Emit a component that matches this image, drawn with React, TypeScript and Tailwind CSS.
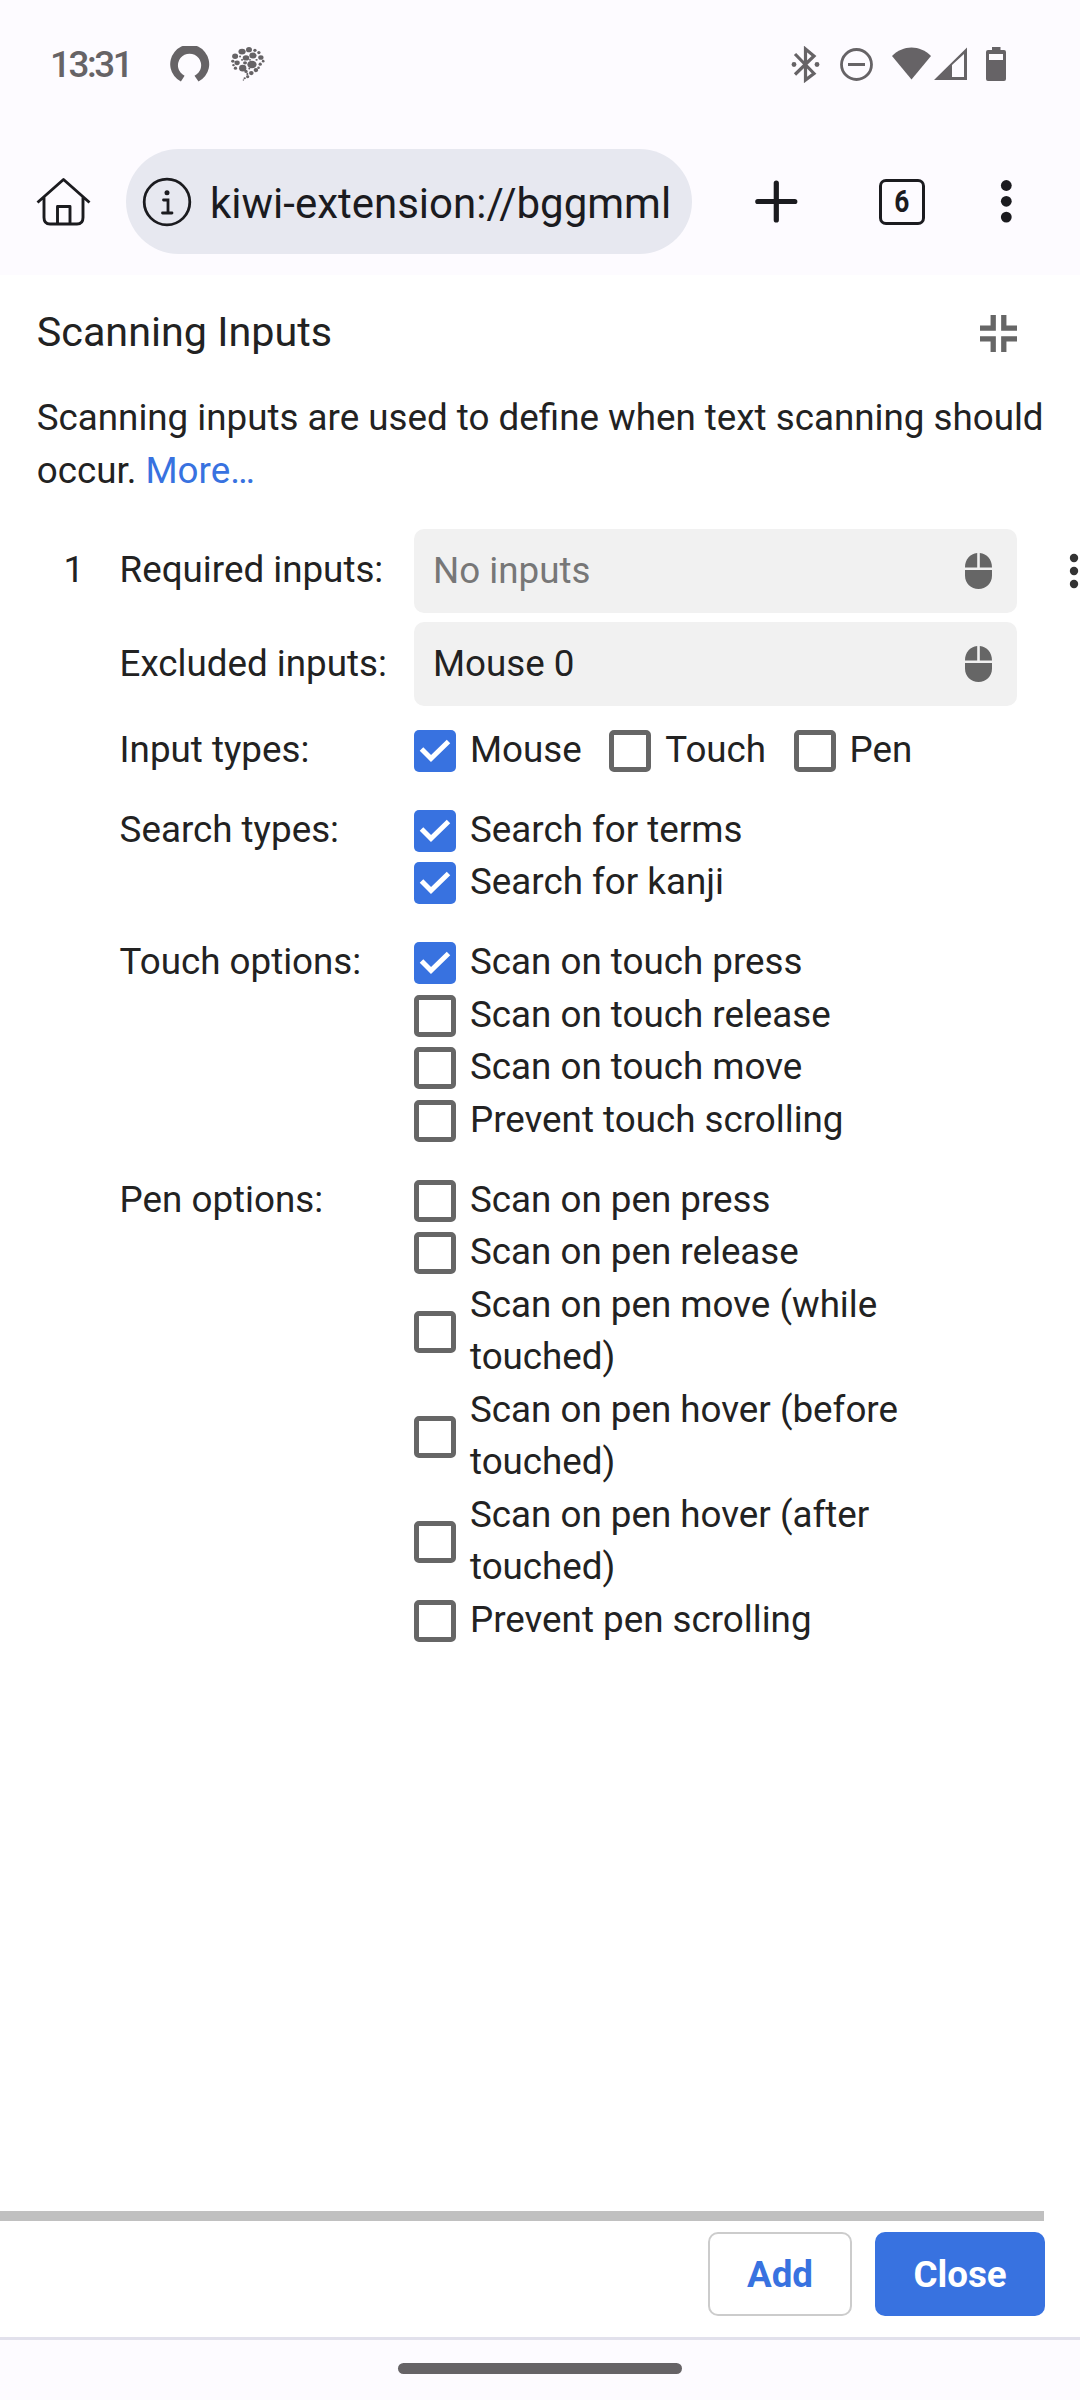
import React from "react";

type Option = { label: string; checked?: boolean };

const searchTypes: Option[] = [
  { label: "Search for terms", checked: true },
  { label: "Search for kanji", checked: true },
];

const touchOptions: Option[] = [
  { label: "Scan on touch press", checked: true },
  { label: "Scan on touch release" },
  { label: "Scan on touch move" },
  { label: "Prevent touch scrolling" },
];

const penOptions: Option[] = [
  { label: "Scan on pen press" },
  { label: "Scan on pen release" },
  { label: "Scan on pen move (while touched)" },
  { label: "Scan on pen hover (before touched)" },
  { label: "Scan on pen hover (after touched)" },
  { label: "Prevent pen scrolling" },
];

// Notification dots: cx, cy, rx, ry
const dots: number[][] = [
  [33, 20, 11, 9], [54, 14, 9, 8], [72, 16, 5, 5], [84, 23, 5, 5], [12, 34, 9, 8],
  [45, 39, 10, 8], [66, 32, 11, 9], [90, 38, 8, 7], [27, 35, 3, 3], [5, 49, 5, 4.5],
  [18, 54, 8, 7], [42, 54, 6, 5], [33, 45, 3.5, 3], [63, 59, 14, 11.5], [57, 45, 3, 3],
  [77, 45, 3.5, 3], [88, 58, 5, 5], [97, 49, 4, 4], [35, 70, 11, 10], [13, 70, 5, 5],
  [7, 61, 4, 3.5], [75, 76, 7, 6.5], [45, 80, 5, 5], [55, 71, 3, 3], [61, 85, 7, 6.5],
  [83, 69, 4, 4], [50, 96, 5, 4.5], [41, 101, 3.5, 3], [37, 106, 2, 2], [49, 88, 3, 4],
];

function Checkbox({ checked }: { checked?: boolean }) {
  return checked ? (
    <span className="mt-[1.6px] flex size-[42px] shrink-0 rounded-[5px] bg-[#3872e0]">
      <svg viewBox="0 0 42 42" className="size-[42px]">
        <path d="M7.5 19 17 28.5 34.5 11.5" fill="none" stroke="#fff" strokeWidth="5" />
      </svg>
    </span>
  ) : (
    <span className="mt-[1.6px] size-[42px] shrink-0 rounded-[5px] border-[5px] border-[#666]" />
  );
}

function Check({ option }: { option: Option }) {
  return (
    <label className="flex items-center gap-[14px]">
      <Checkbox checked={option.checked} />
      <span>{option.label}</span>
    </label>
  );
}

function Row({ label, children }: { label: string; children: React.ReactNode }) {
  return (
    <div className="flex">
      <div className="w-[294.4px] shrink-0">{label}</div>
      <div className="w-[510px]">{children}</div>
    </div>
  );
}

function MouseIcon() {
  return (
    <svg viewBox="0 0 27 36" className="h-9 w-[27px]" fill="#666">
      <path d="M0 14.5C0 6.500 5 .6 12.200 0V14.500ZM14.800 0C22 .6 27 6.500 27 14.500H14.800ZM0 17H27V22.500C27 30.500 21 36 13.500 36S0 30.500 0 22.500Z" />
    </svg>
  );
}

function InputRow({ label, value, muted }: { label: string; value: string; muted?: boolean }) {
  return (
    <div className="flex h-[84px] items-center">
      <div className={muted ? "w-[294.4px] shrink-0 pb-[2px]" : "w-[294.4px] shrink-0"}>{label}</div>
      <div className="flex h-[84px] w-[603px] items-center justify-between rounded-[10px] bg-[#f1f1f1] pr-[25px] pl-[19px]">
        <span className={muted ? "text-[#777]" : ""}>{value}</span>
        <MouseIcon />
      </div>
    </div>
  );
}

function StatusBar() {
  return (
    <header className="flex h-[128px] items-center pl-[50px] text-[#666366]">
      <div className="w-[120px] pt-[2px] text-[36.75px] font-medium tracking-[-2.4px]">13:31</div>
      <svg viewBox="0 0 40 36" className="h-9 w-10">
        <path d="M10.900 35.600A19.500 19.500 0 1 1 28.500 35.600L24.500 29.800A11.600 11.600 0 1 0 14.600 29.800Z" fill="#666366" />
      </svg>
      <svg viewBox="0 6 102 103" className="ml-[21px] h-[34px] w-[34px]" fill="#666366">
        {dots.map(([cx, cy, rx, ry], i) => (
          <ellipse key={i} cx={cx} cy={cy} rx={rx} ry={ry} />
        ))}
      </svg>
      <svg viewBox="790 46 218 37" className="ml-[525px] h-[37px] w-[218px]" fill="#666366">
        <path d="M795 54 814 73.500 805.500 80V49L814 56 795 74.500" fill="none" stroke="#666366" strokeWidth="3.200" />
        <circle cx="794" cy="64.500" r="2.400" />
        <circle cx="817" cy="64.500" r="2.400" />
        <circle cx="856.500" cy="64.500" r="15" fill="none" stroke="#666366" strokeWidth="2.800" />
        <path d="M848 63H865V66H848Z" />
        <path d="M892 56C903 44.500 920 44.500 931 56L911.500 79.500Z" />
        <path fillRule="evenodd" d="M934 80 967 47.500V80ZM952 65V77H964V54Z" />
        <path fillRule="evenodd" d="M992 47H1000.500V50H1004Q1006 50 1006 52V79Q1006 81 1004 81H988Q986 81 986 79V52Q986 50 988 50H992ZM989 54V60H1003V54Z" />
      </svg>
    </header>
  );
}

function Toolbar() {
  return (
    <nav className="flex h-[147px] items-center pl-9 text-[#1b1b1f]">
      <svg viewBox="36 176.500 56 50" className="h-[50px] w-14" fill="none" stroke="#1b1b1f" strokeWidth="2.900">
        <path d="M37.500 202 63.500 179 89.500 202M44 197V217Q44 223.500 50 223.500H77Q83 223.500 83 217V197M57.500 223V206H70V223" strokeLinejoin="round" />
      </svg>
      <div className="ml-[34px] flex h-[105px] w-[566px] items-center overflow-hidden rounded-full bg-[#e7e8f0] pl-4">
        <svg viewBox="0 0 50 50" className="size-[50px] shrink-0" fill="none" stroke="#1b1b1f" strokeWidth="2.800" strokeLinecap="round">
          <circle cx="25" cy="25" r="22.800" />
          <path d="M21.500 23H26V36M20.500 36H30" />
          <circle cx="25" cy="15.800" r="2.500" fill="#1b1b1f" stroke="none" />
        </svg>
        <span className="ml-[18px] pt-[5px] text-[42px] leading-none whitespace-nowrap">kiwi-extension://bggmml</span>
      </div>
      <svg viewBox="0 0 44 44" className="ml-[62px] size-11" stroke="#1b1b1f" strokeWidth="5.200" strokeLinecap="round">
        <path d="M22.300 3V40M3.800 21.500H40.800" />
      </svg>
      <div className="ml-[81px] flex size-[46px] items-center justify-center rounded-[7px] border-[3px] border-[#1b1b1f] text-[31px] leading-none font-bold">
        <span className="scale-x-[.85]">6</span>
      </div>
      <svg viewBox="0 0 12 44" className="ml-[75px] h-11 w-3" fill="#1b1b1f">
        <circle cx="6.300" cy="5.500" r="5.400" />
        <circle cx="6.300" cy="21.300" r="5.400" />
        <circle cx="6.300" cy="37.100" r="5.400" />
      </svg>
    </nav>
  );
}

export default function App() {
  return (
    <div className="flex h-[2400px] w-[1080px] flex-col overflow-hidden bg-[#fdfbff] font-['Roboto',sans-serif]">
      <StatusBar />
      <Toolbar />
      <main className="flex h-[2062px] flex-col bg-white text-[36.75px] leading-[52.5px] text-[#222]">
        <div className="flex h-[117px] items-center justify-between pr-[63px] pl-[36.75px]">
          <h1 className="pb-[2px] text-[41.3px]">Scanning Inputs</h1>
          <svg viewBox="0 0 14 14" className="size-[37px]" fill="#666">
            <path d="M0 4H4V0H6V6H0ZM8 0H10V4H14V6H8ZM0 8H6V14H4V10H0ZM8 8H14V10H10V14H8Z" />
          </svg>
        </div>
        <p className="pl-[36.75px] whitespace-nowrap">
          Scanning inputs are used to define when text scanning should
          <br />
          occur. <a className="text-[#3872e0]">More…</a>
        </p>
        <section className="mt-[32px] flex">
          <div className="w-[119.6px] shrink-0 pt-[14.500px] pl-[63.6px]">1</div>
          <div className="flex w-[897.4px] shrink-0 flex-col">
            <InputRow label="Required inputs:" value="No inputs" muted />
            <div className="h-[9px]" />
            <InputRow label="Excluded inputs:" value="Mouse 0" />
            <div className="mt-[17.700px] flex flex-col gap-[27.5px]">
              <Row label="Input types:">
                <div className="flex gap-[27.500px]">
                  <Check option={{ label: "Mouse", checked: true }} />
                  <Check option={{ label: "Touch" }} />
                  <Check option={{ label: "Pen" }} />
                </div>
              </Row>
              <Row label="Search types:">
                {searchTypes.map((o) => <Check key={o.label} option={o} />)}
              </Row>
              <Row label="Touch options:">
                {touchOptions.map((o) => <Check key={o.label} option={o} />)}
              </Row>
              <Row label="Pen options:">
                {penOptions.map((o) => <Check key={o.label} option={o} />)}
              </Row>
            </div>
          </div>
          <svg viewBox="0 0 10 36" className="mt-6 ml-[52px] h-9 w-[10px] shrink-0" fill="#333">
            <circle cx="5" cy="5" r="4.200" />
            <circle cx="5" cy="18" r="4.200" />
            <circle cx="5" cy="31" r="4.200" />
          </svg>
        </section>
        <div className="mt-auto h-[10px] w-[1044px] shrink-0 bg-[#c0c0c0]" />
        <footer className="flex h-[116px] shrink-0 justify-end gap-[23px] pt-[11px] pr-[35px] font-bold">
          <button className="h-[84px] w-[144px] rounded-[10px] border-2 border-[#ccc] pt-[2px] text-[#3872e0]">Add</button>
          <button className="h-[84px] w-[170px] rounded-[10px] bg-[#3872e0] pt-[2px] text-white">Close</button>
        </footer>
      </main>
      <div className="flex h-[63px] justify-center border-t-[3px] border-[#e2e1ec] pt-[23px]">
        <div className="h-[11px] w-[284px] rounded-full bg-[#666366]" />
      </div>
    </div>
  );
}
